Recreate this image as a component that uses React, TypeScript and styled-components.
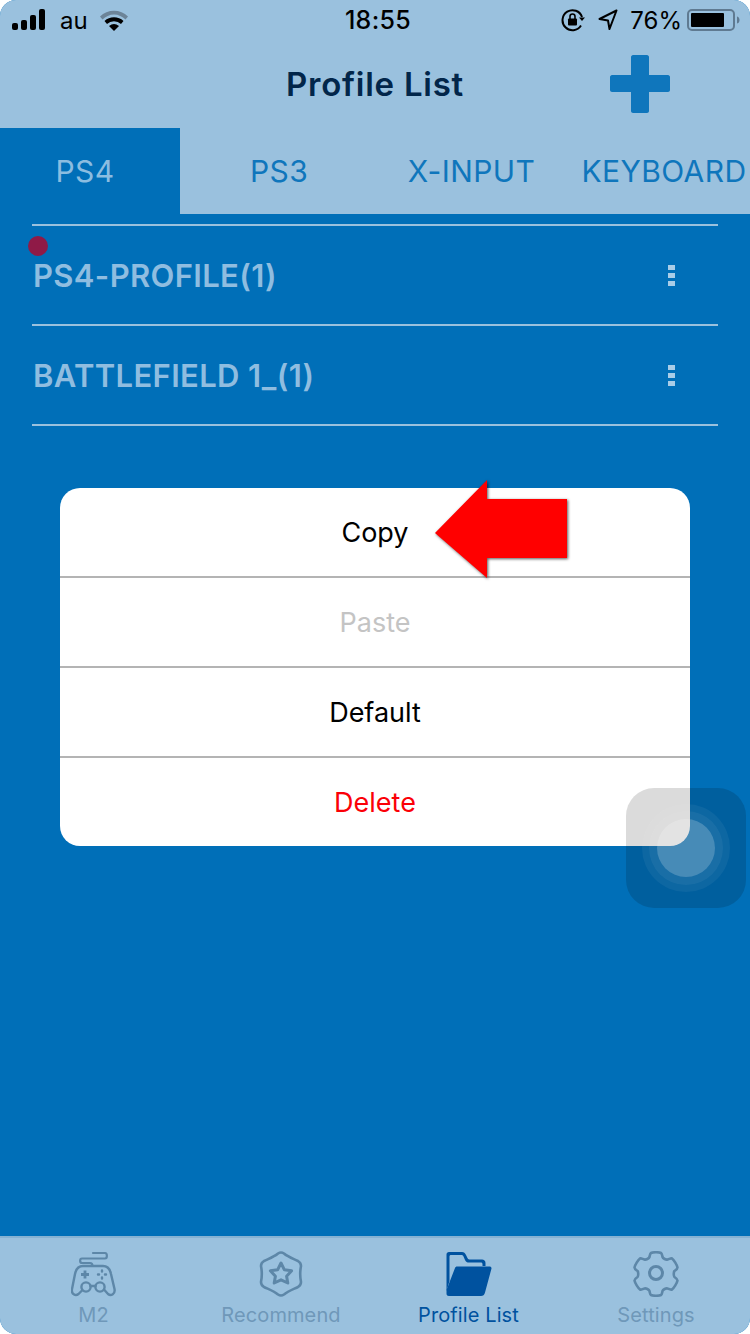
import React from "react";
import styled, { createGlobalStyle } from "styled-components";

const GlobalStyle = createGlobalStyle`
  html, body {
    margin: 0;
    padding: 0;
    background: #ffffff;
  }
  * {
    box-sizing: border-box;
  }
`;

const Screen = styled.div`
  position: relative;
  width: 750px;
  height: 1334px;
  display: flex;
  flex-direction: column;
  overflow: hidden;
  border-radius: 16px;
  background-color: #006fb8;
  font-family: Inter, "Liberation Sans", sans-serif;
`;

const Header = styled.header`
  background-color: #9ac1de;
  height: 214px;
  flex-shrink: 0;
`;

const StatusBar = styled.div`
  height: 40px;
  padding: 0 9px 0 12px;
  display: grid;
  grid-template-columns: 1fr auto 1fr;
  align-items: center;
  color: #000;
  font-size: 24px;
`;

const StatusLeft = styled.div`
  display: flex;
  align-items: center;
`;

const StatusRight = styled.div`
  display: flex;
  align-items: center;
  justify-content: flex-end;
`;

const Carrier = styled.span`
  margin: 0 11px 0 12px;
  font-size: 24px;
  font-weight: 400;
`;

const Clock = styled.span`
  font-size: 25px;
  font-weight: 500;
  letter-spacing: 0.3px;
  margin-left: 3px;
`;

const Percent = styled.span`
  margin: 0 5px 0 12px;
  font-size: 24px;
  white-space: nowrap;
`;

const RotationGap = styled.span`
  width: 13px;
`;

const TitleRow = styled.div`
  height: 88px;
  display: grid;
  grid-template-columns: 1fr auto 1fr;
  align-items: center;
`;

const Title = styled.h1`
  grid-column: 2;
  margin: 0;
  font-size: 33px;
  font-weight: 600;
  letter-spacing: 0.75px;
  color: #02264a;
`;

const AddWrap = styled.div`
  display: flex;
  padding-left: 146px;
`;

const Tabs = styled.nav`
  height: 86px;
  display: flex;
`;

const Tab = styled.div<{ $w: number; $active?: boolean; $right?: number; $left?: number }>`
  width: ${(p) => p.$w}px;
  padding: 0 ${(p) => p.$right ?? 0}px 0 ${(p) => p.$left ?? 0}px;
  display: flex;
  align-items: center;
  justify-content: center;
  white-space: nowrap;
  font-size: 30px;
  font-weight: 400;
  letter-spacing: 0.4px;
  color: ${(p) => (p.$active ? "#8cbde0" : "#0f76bc")};
  background-color: ${(p) => (p.$active ? "#006fb8" : "transparent")};
`;

const ProfileList = styled.div`
  margin: 10px 32px 0;
  border-top: 2px solid #9ac1de;
`;

const ProfileRow = styled.div`
  position: relative;
  height: 100px;
  display: flex;
  align-items: center;
  justify-content: space-between;
  padding: 1px 43px 0 1px;
  border-bottom: 2px solid #9ac1de;
  font-size: 31px;
  font-weight: 600;
  letter-spacing: 0.35px;
  color: #8fbde0;
`;

const Kebab = styled.div`
  display: flex;
  flex-direction: column;
  gap: 3px;
  i {
    display: block;
    width: 7px;
    height: 5px;
    background-color: #a9cde8;
  }
`;

const RedDot = styled.span`
  position: absolute;
  left: -4px;
  top: 10px;
  width: 20px;
  height: 20px;
  border-radius: 50%;
  background-color: #8f1a47;
`;

const ActionSheet = styled.div`
  position: absolute;
  left: 60px;
  top: 488px;
  width: 630px;
  height: 358px;
  display: flex;
  flex-direction: column;
  overflow: hidden;
  border-radius: 20px;
  background-color: #ffffff;
`;

const Action = styled.div<{ $color: string }>`
  flex: 1;
  display: flex;
  align-items: center;
  justify-content: center;
  font-size: 27px;
  color: ${(p) => p.$color};
  & + & {
    border-top: 2px solid #b4b4b4;
  }
`;

const Arrow = styled.svg`
  position: absolute;
  left: 430px;
  top: 474px;
  filter: drop-shadow(1px 1px 1.5px rgba(0, 0, 0, 0.65));
`;

const FloatButton = styled.div`
  position: absolute;
  left: 626px;
  top: 788px;
  width: 120px;
  height: 120px;
  display: flex;
  align-items: center;
  justify-content: center;
  border-radius: 28px;
  background-color: rgba(0, 0, 0, 0.14);
`;

const Ring = styled.div<{ $size: number; $alpha: number }>`
  width: ${(p) => p.$size}px;
  height: ${(p) => p.$size}px;
  flex-shrink: 0;
  display: flex;
  align-items: center;
  justify-content: center;
  border-radius: 50%;
  background-color: rgba(255, 255, 255, ${(p) => p.$alpha});
`;

const BottomBar = styled.footer`
  margin-top: auto;
  height: 98px;
  display: flex;
  background-color: #9ac1de;
  border-top: 2px solid #86b2d3;
`;

const BottomTab = styled.div<{ $w: number; $active?: boolean }>`
  width: ${(p) => p.$w}px;
  display: flex;
  flex-direction: column;
  align-items: center;
  padding-top: 13px;
  font-size: 20px;
  letter-spacing: 0.1px;
  color: ${(p) => (p.$active ? "#00529f" : "#6f98b9")};
  svg {
    display: block;
    margin-bottom: 6px;
  }
`;

const StatIcons = {
  signal: (
    <svg width="36" height="22" viewBox="0 0 36 22">
      <rect x="0" y="14" width="6" height="7" rx="2" fill="#000" />
      <rect x="9" y="11" width="6" height="10" rx="2" fill="#000" />
      <rect x="18" y="6" width="6" height="15" rx="2" fill="#000" />
      <rect x="27" y="0" width="6" height="21" rx="2" fill="#000" />
    </svg>
  ),
  wifi: (
    <svg width="30" height="22" viewBox="0 0 30 22">
      <path d="M1 7.5 A20 20 0 0 1 29 7.5 L26.5 10.5 A16 16 0 0 0 3.5 10.5 Z" fill="#6c8498" />
      <path d="M5.5 12 A14 14 0 0 1 24.5 12 L22 15 A10 10 0 0 0 8 15 Z" fill="#000" />
      <path d="M10 17 A8 8 0 0 1 20 17 L15 22 Z" fill="#000" />
    </svg>
  ),
  lock: (
    <svg width="24" height="24" viewBox="0 0 24 24" fill="none">
      <path d="M20 17.5 A10 10 0 1 1 21 9" stroke="#000" strokeWidth="2" />
      <path d="M18 9.5 L24 9.5 L21 13 Z" fill="#000" />
      <rect x="7" y="10.5" width="9" height="7" rx="1" fill="#000" />
      <path d="M9 11 V8.5 A2.5 2.5 0 0 1 14 8.5 V11" stroke="#000" strokeWidth="1.6" />
    </svg>
  ),
  location: (
    <svg width="20" height="22" viewBox="0 0 20 22" fill="none">
      <path d="M18.5 1.5 L1.5 10 L10 11.5 L11.5 20 Z" stroke="#000" strokeWidth="2" strokeLinejoin="round" />
    </svg>
  ),
  battery: (
    <svg width="54" height="24" viewBox="0 0 54 24">
      <rect x="1" y="2" width="46" height="20" rx="4" fill="none" stroke="#5f7a91" strokeWidth="2" />
      <rect x="4" y="5" width="33" height="14" rx="1" fill="#000" />
      <path d="M50 8.5 C52 9 52.5 10.5 52.5 12 C52.5 13.5 52 15 50 15.5 Z" fill="#5f7a91" />
    </svg>
  ),
};

const GamepadIcon = () => (
  <svg width="46" height="46" viewBox="0 0 46 46" fill="none" stroke="#5d87a8" strokeWidth="2.4" strokeLinecap="round" strokeLinejoin="round">
    <path d="M22 2 H34 C36.5 2 36.5 7.5 34 7.5 H11 C8.5 7.5 8.5 12 11 12 H19 C21 12 21.5 13 21.5 15" strokeWidth="2.2" />
    <path d="M12 15 H32 C37 15 39 18 40 23 L43.5 38 C44.5 43 40 45.5 37 43 L33 38.5 M12 15 C7 15 5 18 4 23 L1 38 C0 43 4.5 45.5 7.5 43 L11 39.5" />
    <circle cx="15" cy="36" r="4.6" />
    <circle cx="29" cy="36" r="4.6" />
    <path d="M19.5 35 H24.5" />
    <path d="M10 23.5 H18 M14 19.5 V27.5" strokeWidth="2.8" strokeLinecap="butt" />
    <path d="M31 19.5 V20.5 M31 26.5 V27.5 M27 23.5 H28 M34 23.5 H35" strokeWidth="2.4" />
  </svg>
);

const BadgeIcon = () => (
  <svg width="46" height="46" viewBox="0 0 46 46" fill="none" stroke="#5d87a8" strokeWidth="2.6" strokeLinejoin="round">
    <path d="M20 2.5 C22 1.2 24 1.2 26 2.5 C30 6 36 8 40 10 C42 11.2 43 12.8 43 15 C42 20 42 26 43 31 C43 33.2 42 34.8 40 36 C36 38 30 40 26 43.5 C24 44.8 22 44.8 20 43.5 C16 40 10 38 6 36 C4 34.8 3 33.2 3 31 C4 26 4 20 3 15 C3 12.8 4 11.2 6 10 C10 8 16 6 20 2.5 Z" />
    <path d="M23 12 L26.4 18.8 L33.6 19.8 L28.6 25.2 L29.8 32 L23 28.8 L16.2 32 L17.4 25.2 L12.4 19.8 L19.6 18.8 Z" strokeWidth="3" />
  </svg>
);

const FolderIcon = () => (
  <svg width="46" height="46" viewBox="0 0 46 46">
    <path d="M3 1 H16 C18 1 19 2 20 4 L21.5 7 C22 8 23 8.5 24 8.5 H36 C38 8.5 39.5 10 39.5 12 V15 H36.5 V13.5 C36.5 12 36 11.5 34.5 11.5 H23 C21 11.5 20 11 19 9 L17.5 5.5 C17 4.5 16.5 4 15.5 4 H5 C4 4 3.5 4.5 3.5 5.5 V30 L0.5 40 V3.5 C0.5 2 1.5 1 3 1 Z" fill="#00529f" />
    <path d="M9 17 C9.5 16 10 15.5 11 15.5 H44 C45 15.5 45.5 16.5 45.5 17.5 L39 41.5 C38.5 44 37 45 35 45 H3 C1 45 0.5 44 0.5 42.5 V39 Z" fill="#00529f" />
  </svg>
);

const GearIcon = () => (
  <svg width="46" height="46" viewBox="0 0 46 46" fill="none" stroke="#5d87a8" strokeWidth="2.6" strokeLinejoin="round">
    <path d="M18 2 C20 1 26 1 28 2 C29 2.5 29 4 29.5 6 C30 7.5 33 9 34.5 8.5 C36.5 8 38 7 39 7.5 C41 9 44 14 44.5 16.5 C44.5 18 43 19 41.5 20 C40.5 21 40.5 25 41.5 26 C43 27 44.5 28 44.5 29.5 C44 32 41 37 39 38.5 C38 39 36.5 38 34.5 37.5 C33 37 30 38.5 29.5 40 C29 42 29 43.5 28 44 C26 45 20 45 18 44 C17 43.5 17 42 16.5 40 C16 38.5 13 37 11.5 37.5 C9.5 38 8 39 7 38.5 C5 37 2 32 1.5 29.5 C1.5 28 3 27 4.5 26 C5.5 25 5.5 21 4.5 20 C3 19 1.5 18 1.5 16.5 C2 14 5 9 7 7.5 C8 7 9.5 8 11.5 8.5 C13 9 16 7.5 16.5 6 C17 4 17 2.5 18 2 Z" />
    <circle cx="23" cy="22" r="6.5" strokeWidth="3" />
  </svg>
);

const App = () => {
  return (
    <Screen>
      <GlobalStyle />
      <Header>
        <StatusBar>
          <StatusLeft>
            {StatIcons.signal}
            <Carrier>au</Carrier>
            {StatIcons.wifi}
          </StatusLeft>
          <Clock>18:55</Clock>
          <StatusRight>
            {StatIcons.lock}
            <RotationGap />
            {StatIcons.location}
            <Percent>76%</Percent>
            {StatIcons.battery}
          </StatusRight>
        </StatusBar>
        <TitleRow>
          <Title>Profile List</Title>
          <AddWrap>
            <svg width="60" height="58" viewBox="0 0 60 58">
              <path d="M21 2 C21 1 22 0 23 0 H37 C38 0 39 1 39 2 V20 H58 C59 20 60 21 60 22 V35 C60 36 59 37 58 37 H39 V56 C39 57 38 58 37 58 H23 C22 58 21 57 21 56 V37 H2 C1 37 0 36 0 35 V22 C0 21 1 20 2 20 H21 Z" fill="#0f76bc" />
            </svg>
          </AddWrap>
        </TitleRow>
        <Tabs>
          <Tab $w={180} $right={10} $active>PS4</Tab>
          <Tab $w={198}>PS3</Tab>
          <Tab $w={186} $left={1}>X-INPUT</Tab>
          <Tab $w={186} $left={14}>KEYBOARD</Tab>
        </Tabs>
      </Header>

      <ProfileList>
        <ProfileRow>
          <RedDot />
          PS4-PROFILE(1)
          <Kebab><i /><i /><i /></Kebab>
        </ProfileRow>
        <ProfileRow>
          BATTLEFIELD 1_(1)
          <Kebab><i /><i /><i /></Kebab>
        </ProfileRow>
      </ProfileList>

      <BottomBar>
        <BottomTab $w={187}><GamepadIcon />M2</BottomTab>
        <BottomTab $w={188}><BadgeIcon />Recommend</BottomTab>
        <BottomTab $w={187} $active><FolderIcon />Profile List</BottomTab>
        <BottomTab $w={188}><GearIcon />Settings</BottomTab>
      </BottomBar>

      <ActionSheet>
        <Action $color="#000000">Copy</Action>
        <Action $color="#c4c4c4">Paste</Action>
        <Action $color="#000000">Default</Action>
        <Action $color="#fb0007">Delete</Action>
      </ActionSheet>

      <Arrow width="150" height="116" viewBox="0 0 150 116">
        <path d="M5 59 L57 6 V25 H137 V84 H57 V104 Z" fill="#ff0000" />
      </Arrow>

      <FloatButton>
        <Ring $size={88} $alpha={0.05}>
          <Ring $size={74} $alpha={0.05}>
            <Ring $size={58} $alpha={0.2} />
          </Ring>
        </Ring>
      </FloatButton>
    </Screen>
  );
};

export default App;
